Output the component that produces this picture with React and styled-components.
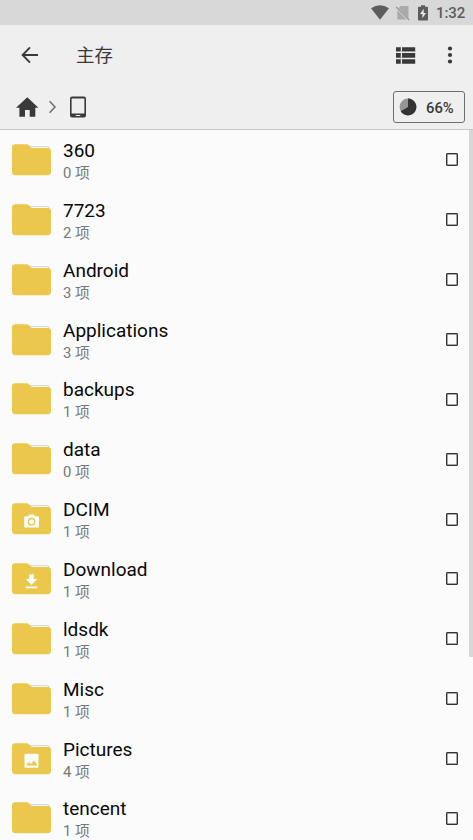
import React from "react";
import styled, { createGlobalStyle } from "styled-components";

const GlobalStyle = createGlobalStyle`
  * { box-sizing: border-box; }
  html, body { margin: 0; padding: 0; overflow: hidden; background: #fbfbfb; }
  body { font-family: Roboto, "Noto Sans CJK SC", sans-serif; }
  svg { display: block; flex: none; }
`;

const Screen = styled.div`
  display: flex;
  flex-direction: column;
  width: 473px;
  height: 840px;
  overflow: hidden;
  background: #fbfbfb;
`;

const StatusBar = styled.div`
  display: flex;
  flex: none;
  align-items: center;
  justify-content: flex-end;
  height: 25px;
  padding-right: 9px;
  background: #d8d8d8;
  color: #5c5c5c;
`;

const Clock = styled.span`
  width: 28px;
  margin-left: 3px;
  padding-top: 1px;
  font-size: 15px;
  line-height: 20px;
  font-weight: 500;
  letter-spacing: -0.1px;
  white-space: nowrap;
`;

const StatusIcons = styled.div`
  display: flex;
  align-items: center;
  gap: 6px;
`;

const Header = styled.header`
  flex: none;
  height: 105px;
  background: #efefef;
  border-bottom: 1px solid #c9c9c9;
  color: #393939;
`;

const Toolbar = styled.div`
  display: flex;
  align-items: center;
  height: 60px;
  padding: 0 14px 0 21px;
`;

const IconButton = styled.button`
  display: flex;
  align-items: center;
  justify-content: center;
  width: ${(p) => p.$width}px;
  height: 24px;
  padding: 0;
  border: 0;
  background: none;
  color: inherit;
`;

const Title = styled.h1`
  flex: 1;
  margin: 0 0 0 37px;
  padding-top: 1px;
  font-size: 18.5px;
  line-height: 28px;
  font-weight: 400;
`;

const Actions = styled.div`
  display: flex;
  align-items: center;
  gap: 25px;
`;

const PathBar = styled.div`
  display: flex;
  align-items: center;
  height: 44px;
  padding: 0 8px 0 16px;
`;

const Crumbs = styled.nav`
  display: flex;
  flex: 1;
  align-items: center;
  gap: 10px;
`;

const Usage = styled.div`
  display: flex;
  align-items: center;
  gap: 9px;
  width: 72px;
  height: 32px;
  padding-left: 5px;
  border: 1px solid #6e6e6e;
  border-radius: 3px;
  font-size: 14.8px;
  font-weight: 500;
  line-height: 20px;
`;

const UsageValue = styled.span`
  padding-top: 1px;
`;

const ListArea = styled.main`
  display: flex;
  flex: 1;
  min-height: 0;
`;

const FileList = styled.ul`
  flex: 1;
  margin: 0;
  padding: 0;
  list-style: none;
`;

const Row = styled.li`
  display: flex;
  align-items: center;
  height: 59.86px;
  padding: 0 11px 0 12px;
`;

const Details = styled.div`
  flex: 1;
  margin-left: 12px;
  padding-top: 2px;
`;

const Name = styled.div`
  font-size: 19px;
  line-height: 24px;
  color: #080808;
`;

const Count = styled.div`
  font-size: 14.8px;
  line-height: 20px;
  color: #777;
`;

const Checkbox = styled.span`
  width: 12px;
  height: 13px;
  border: 1px solid #333;
  box-shadow: inset 0 0 0 0.5px #555;
  border-radius: 1px;
`;

const Scrollbar = styled.div`
  width: 4px;
  height: 527px;
  background: #d7d7d7;
`;

const glyphs = {
  camera: (
    <>
      <path fill="#fff" d="M17.2 11.6h4.6l1.3 1.7H26c.6 0 1 .4 1 1v9.2c0 .6-.4 1-1 1H13.2c-.6 0-1-.4-1-1v-9.2c0-.6.4-1 1-1h2.7z" />
      <circle cx="19.5" cy="18.7" r="3.2" fill="#fff" stroke="#ebc74b" strokeWidth="1.4" />
    </>
  ),
  download: (
    <path fill="#fff" d="M17.2 11.2h4.6v4.8h3.5l-5.8 5.9-5.8-5.9h3.5zM13.8 23.5h11.4v1.8H13.8z" />
  ),
  image: (
    <>
      <rect x="12.5" y="10.7" width="14" height="14" rx="1.2" fill="#fff" />
      <path fill="#ebc74b" d="M14 22.4l2.8-3.4 2.1 2.3 3-4.1 3.7 5.2z" />
    </>
  ),
};

const Folder = ({ kind }) => (
  <svg width="39" height="32" viewBox="0 0 39 32">
    <path d="M15 2.7h21.5v4H15z" fill="#fff" />
    <path d="M17 2.7h19.2q.5 0 .5.5v2" fill="none" stroke="#c9ced3" strokeWidth=".9" />
    <path d="M3.2.3h11.4q1.4 0 2.3 1l1.8 1.9q.8.8 2 .8h15.1Q39 4 39 7.2v20.6q0 3.4-3.4 3.4H3.4Q0 31.2 0 27.8V3.5Q0 .3 3.2.3z" fill="#ebc74b" />
    {glyphs[kind]}
  </svg>
);

const WifiIcon = () => (
  <svg width="18" height="15" viewBox="0 0 18 15">
    <path d="M0 3.3Q9-2.7 18 3.3L9 14.8z" fill="currentColor" />
  </svg>
);

const NoSimIcon = () => (
  <svg width="16" height="16" viewBox="0 0 16 16">
    <path d="M5.6 1H13.5v12.4L3.7 3zM2.3 5.2l9.2 9.3H2.3z" fill="#aaa" />
    <path d="M1.2 2l13 13" stroke="#999" strokeWidth="1.2" />
  </svg>
);

const BatteryIcon = () => (
  <svg width="16" height="16" viewBox="3 0 16 16">
    <path d="M7 .3h4v1.5h2.2q.8 0 .8.8v12q0 .9-.8.9H4.8q-.8 0-.8-.9v-12q0-.8.8-.8H7z" fill="currentColor" />
    <path d="M9.7 3.7L6 9h2.4v4.2L12 8H9.7z" fill="#e8e8e8" />
  </svg>
);

const BackIcon = () => (
  <svg width="18" height="18" viewBox="0 0 18 18">
    <path d="M17 9H2M9 1.4L1.6 9 9 16.6" fill="none" stroke="currentColor" strokeWidth="1.9" />
  </svg>
);

const ListIcon = () => (
  <svg width="20" height="17" viewBox="0 0 20 17">
    <path d="M0 .2H4.8v4.4H0zM6 .2h13.2v4.4H6zM0 6.1H4.8v4.7H0zM6 6.1h13.2v4.7H6zM0 12.3H4.8v4.4H0zM6 12.3h13.2v4.4H6z" fill="currentColor" />
  </svg>
);

const MoreIcon = () => (
  <svg width="6" height="18" viewBox="0 0 6 18" fill="currentColor">
    <circle cx="3" cy="2.5" r="2.1" />
    <circle cx="3" cy="9" r="2.1" />
    <circle cx="3" cy="15.5" r="2.1" />
  </svg>
);

const HomeIcon = () => (
  <svg width="23" height="20" viewBox="0 0 23 20">
    <path d="M11.3.2L22.4 10.7h-3.1v9h-5.6V13H9v6.7H3.4v-9H0z" fill="currentColor" />
  </svg>
);

const ChevronIcon = () => (
  <svg width="8" height="14" viewBox="0 0 8 14">
    <path d="M.6 1.2L6 7 .6 12.8" fill="none" stroke="#6d6d6d" strokeWidth="1.5" />
  </svg>
);

const TabletIcon = () => (
  <svg width="22" height="22" viewBox="0 0 22 22">
    <path fillRule="evenodd" d="M5 .5h12q2 0 2 2v17q0 2-2 2H5q-2 0-2-2v-17q0-2 2-2zM4.6 2.6v14.9h12.8V2.6zM8.7 18.9v1h4.6v-1z" fill="currentColor" />
  </svg>
);

const PieIcon = () => (
  <svg width="18" height="18" viewBox="0 0 18 18">
    <circle cx="9" cy="9" r="8.4" fill="#969696" />
    <path d="M9 9V.6A8.4 8.4 0 1 1 1.7 13.2z" fill="#343434" />
  </svg>
);

const folders = [
  { name: "360", count: 0 },
  { name: "7723", count: 2 },
  { name: "Android", count: 3 },
  { name: "Applications", count: 3 },
  { name: "backups", count: 1 },
  { name: "data", count: 0 },
  { name: "DCIM", count: 1, kind: "camera" },
  { name: "Download", count: 1, kind: "download" },
  { name: "ldsdk", count: 1 },
  { name: "Misc", count: 1 },
  { name: "Pictures", count: 4, kind: "image" },
  { name: "tencent", count: 1 },
];

export default function App() {
  return (
    <>
      <GlobalStyle />
      <Screen>
        <StatusBar>
          <StatusIcons>
            <WifiIcon />
            <NoSimIcon />
            <BatteryIcon />
          </StatusIcons>
          <Clock>1:32</Clock>
        </StatusBar>
        <Header>
          <Toolbar>
            <IconButton $width={18}><BackIcon /></IconButton>
            <Title>主存</Title>
            <Actions>
              <IconButton $width={20}><ListIcon /></IconButton>
              <IconButton $width={18}><MoreIcon /></IconButton>
            </Actions>
          </Toolbar>
          <PathBar>
            <Crumbs>
              <HomeIcon />
              <ChevronIcon />
              <TabletIcon />
            </Crumbs>
            <Usage>
              <PieIcon />
              <UsageValue>66%</UsageValue>
            </Usage>
          </PathBar>
        </Header>
        <ListArea>
          <FileList>
            {folders.map((folder) => (
              <Row key={folder.name}>
                <Folder kind={folder.kind} />
                <Details>
                  <Name>{folder.name}</Name>
                  <Count>{folder.count} 项</Count>
                </Details>
                <Checkbox />
              </Row>
            ))}
          </FileList>
          <Scrollbar />
        </ListArea>
      </Screen>
    </>
  );
}
